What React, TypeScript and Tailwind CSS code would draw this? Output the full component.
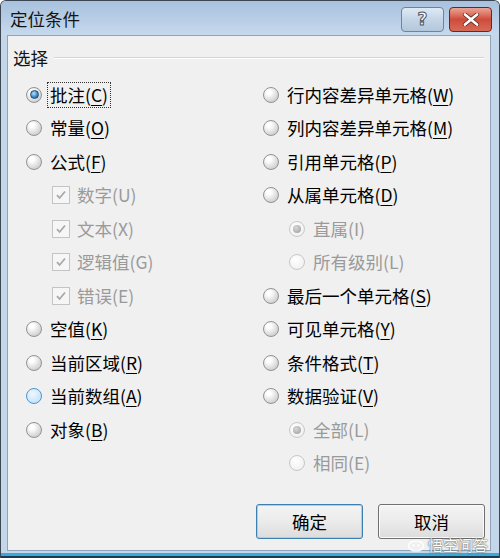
import React from "react";

type RadioKind = "off" | "on" | "hover" | "disOn" | "disOff";

function Radio({ kind }: { kind: RadioKind }) {
  if (kind === "disOn" || kind === "disOff") {
    return (
      <span className="w-4 h-4 shrink-0 rounded-full border border-[#c8c8c8] bg-[radial-gradient(circle_at_40%_35%,#ffffff,#ececec)] flex items-center justify-center">
        {kind === "disOn" && <span className="w-[8px] h-[8px] rounded-full bg-[radial-gradient(circle_at_40%_35%,#d8d8d8,#9a9a9a)]" />}
      </span>
    );
  }
  if (kind === "hover") {
    return (
      <span className="w-4 h-4 shrink-0 rounded-full border border-[#4f94cc] bg-[radial-gradient(circle_at_40%_35%,#eef8ff,#b8dcf5)]" />
    );
  }
  return (
    <span className="w-4 h-4 shrink-0 rounded-full border border-[#939393] bg-[radial-gradient(circle_at_35%_30%,#ffffff_15%,#d8d8d8_65%,#bdbdbd)] flex items-center justify-center">
      {kind === "on" && (
        <span className="w-[9px] h-[9px] rounded-full border border-[#1d4f7c] bg-[radial-gradient(circle_at_40%_35%,#b7e3fb,#3f8ccb_55%,#1a4d80)]" />
      )}
    </span>
  );
}

function Check() {
  return (
    <span className="w-[18px] h-[18px] shrink-0 border border-[#c4c4c4] bg-[#f6f6f6] flex items-center justify-center">
      <svg width="12" height="12" viewBox="0 0 12 12">
        <path d="M2 6.2 L4.6 9 L10 2.5" fill="none" stroke="#a8a8a8" strokeWidth="1.8" />
      </svg>
    </span>
  );
}

function Label({ text, k, disabled, focus }: { text: string; k: string; disabled?: boolean; focus?: boolean }) {
  return (
    <span
      className={
        "leading-[22px] whitespace-nowrap px-[1px] " +
        (disabled ? "text-[#9a9a9a] " : "text-[#000000] ") +
        (focus ? "outline outline-1 outline-dotted outline-[#333] outline-offset-[1px]" : "")
      }
    >
      {text}(
      <span className={disabled ? "" : "underline underline-offset-[3px] decoration-1"}>{k}</span>)
    </span>
  );
}

type Item = { t: string; k: string; type: "radio" | "check" | "sub"; kind?: RadioKind; disabled?: boolean; focus?: boolean };

const left: Item[] = [
  { t: "批注", k: "C", type: "radio", kind: "on", focus: true },
  { t: "常量", k: "O", type: "radio", kind: "off" },
  { t: "公式", k: "F", type: "radio", kind: "off" },
  { t: "数字", k: "U", type: "check", disabled: true },
  { t: "文本", k: "X", type: "check", disabled: true },
  { t: "逻辑值", k: "G", type: "check", disabled: true },
  { t: "错误", k: "E", type: "check", disabled: true },
  { t: "空值", k: "K", type: "radio", kind: "off" },
  { t: "当前区域", k: "R", type: "radio", kind: "off" },
  { t: "当前数组", k: "A", type: "radio", kind: "hover" },
  { t: "对象", k: "B", type: "radio", kind: "off" },
];

const right: Item[] = [
  { t: "行内容差异单元格", k: "W", type: "radio", kind: "off" },
  { t: "列内容差异单元格", k: "M", type: "radio", kind: "off" },
  { t: "引用单元格", k: "P", type: "radio", kind: "off" },
  { t: "从属单元格", k: "D", type: "radio", kind: "off" },
  { t: "直属", k: "I", type: "sub", kind: "disOn", disabled: true },
  { t: "所有级别", k: "L", type: "sub", kind: "disOff", disabled: true },
  { t: "最后一个单元格", k: "S", type: "radio", kind: "off" },
  { t: "可见单元格", k: "Y", type: "radio", kind: "off" },
  { t: "条件格式", k: "T", type: "radio", kind: "off" },
  { t: "数据验证", k: "V", type: "radio", kind: "off" },
  { t: "全部", k: "L", type: "sub", kind: "disOn", disabled: true },
  { t: "相同", k: "E", type: "sub", kind: "disOff", disabled: true },
];

function Row({ it }: { it: Item }) {
  if (it.type === "check") {
    return (
      <div className="h-[33.5px] flex items-center pl-[26px] gap-[6px]">
        <Check />
        <Label text={it.t} k={it.k} disabled />
      </div>
    );
  }
  if (it.type === "sub") {
    return (
      <div className="h-[33.5px] flex items-center pl-[26px] gap-[7px]">
        <Radio kind={it.kind!} />
        <Label text={it.t} k={it.k} disabled />
      </div>
    );
  }
  return (
    <div className="h-[33.5px] flex items-center gap-[7px]">
      <Radio kind={it.kind!} />
      <Label text={it.t} k={it.k} disabled={it.disabled} focus={it.focus} />
    </div>
  );
}

export default function App() {
  return (
    <div className="w-[500px] h-[558px] flex flex-col font-['Noto_Sans_CJK_SC','Noto_Sans',sans-serif] text-[17.5px] bg-[#c3d6ea] border-x border-t border-[#3d4753] rounded-t-[6px] overflow-hidden">
      {/* title bar */}
      <div className="h-[34px] shrink-0 flex items-start bg-gradient-to-b from-[#a8c1dd] to-[#c6d9ed] pl-[9px] pr-[7px]">
        <span className="mt-[7px] text-[17.5px] leading-[22px] text-[#141414]">定位条件</span>
        <div className="ml-auto mt-[6px] flex gap-[5px]">
          <div className="w-[43px] h-[25px] rounded-[4px] border border-[#6f8399] bg-gradient-to-b from-[#dfe9f4] via-[#c5d5e6] to-[#b3c7dc] flex items-center justify-center">
            <span className="text-[17px] font-bold leading-none text-white [-webkit-text-stroke:1px_#4a5563] font-['DejaVu_Sans',sans-serif]">?</span>
          </div>
          <div className="w-[43px] h-[25px] rounded-[4px] border border-[#6e251b] bg-gradient-to-b from-[#e9a596] via-[#cf4b3b] to-[#d66a57] flex items-center justify-center">
            <svg width="18" height="13" viewBox="0 0 18 13">
              <path d="M3 1.5 L15 11.5 M15 1.5 L3 11.5" stroke="#5a1c14" strokeWidth="4.2" strokeLinecap="round" />
              <path d="M3 1.5 L15 11.5 M15 1.5 L3 11.5" stroke="#ffffff" strokeWidth="2.8" strokeLinecap="round" />
            </svg>
          </div>
        </div>
      </div>
      {/* body frame */}
      <div className="flex-1 flex pl-[6px] pr-[8px] pb-[2px]">
        <div className="flex-1 flex flex-col bg-[#f0f0f0] border border-[#8fa3ba] relative">
          <div className="flex items-center pl-[5px] pr-[6px] pt-[12px] gap-[6px]">
            <span className="leading-[20px] text-[#141414]">选择</span>
            <div className="flex-1 h-[2px] border-t border-[#d5d5d5] border-b border-b-[#ffffff]" />
          </div>
          <div className="flex pt-[10px] pl-[18px]">
            <div className="w-[237px] flex flex-col">
              {left.map((it, i) => (
                <Row key={i} it={it} />
              ))}
            </div>
            <div className="flex flex-col">
              {right.map((it, i) => (
                <Row key={i} it={it} />
              ))}
            </div>
          </div>
          <div className="mt-auto mb-[11px] flex justify-end gap-[15px] pr-[5px]">
            <button className="w-[107px] h-[35px] rounded-[3px] border border-[#3c7fb1] shadow-[inset_0_0_0_1px_#9fd3f4] bg-gradient-to-b from-[#f4f4f4] via-[#ebebeb] to-[#dcdcdc] text-[17.5px] leading-[22px] text-[#000]">
              确定
            </button>
            <button className="w-[107px] h-[35px] rounded-[3px] border border-[#707070] shadow-[inset_0_0_0_1px_#fbfbfb] bg-gradient-to-b from-[#f4f4f4] via-[#ebebeb] to-[#dcdcdc] text-[17.5px] leading-[22px] text-[#000]">
              取消
            </button>
          </div>
          <div className="absolute right-[2px] bottom-[-3px] flex items-center gap-[3px] text-[15px] leading-[16px] text-white [text-shadow:0_0_2px_#555,0_0_1px_#333] opacity-90">
            <svg width="18" height="14" viewBox="0 0 18 14">
              <ellipse cx="9" cy="8" rx="7.5" ry="5" fill="none" stroke="#fff" strokeWidth="1.6" />
              <circle cx="6.5" cy="7.5" r="1.2" fill="#fff" />
              <circle cx="11.5" cy="7.5" r="1.2" fill="#fff" />
            </svg>
            <span>悟空问答</span>
          </div>
        </div>
      </div>
      <div className="h-[3px] shrink-0 bg-[#3aa9d8]" />
      <div className="h-[2px] shrink-0 bg-[#1c3c4e]" />
    </div>
  );
}
